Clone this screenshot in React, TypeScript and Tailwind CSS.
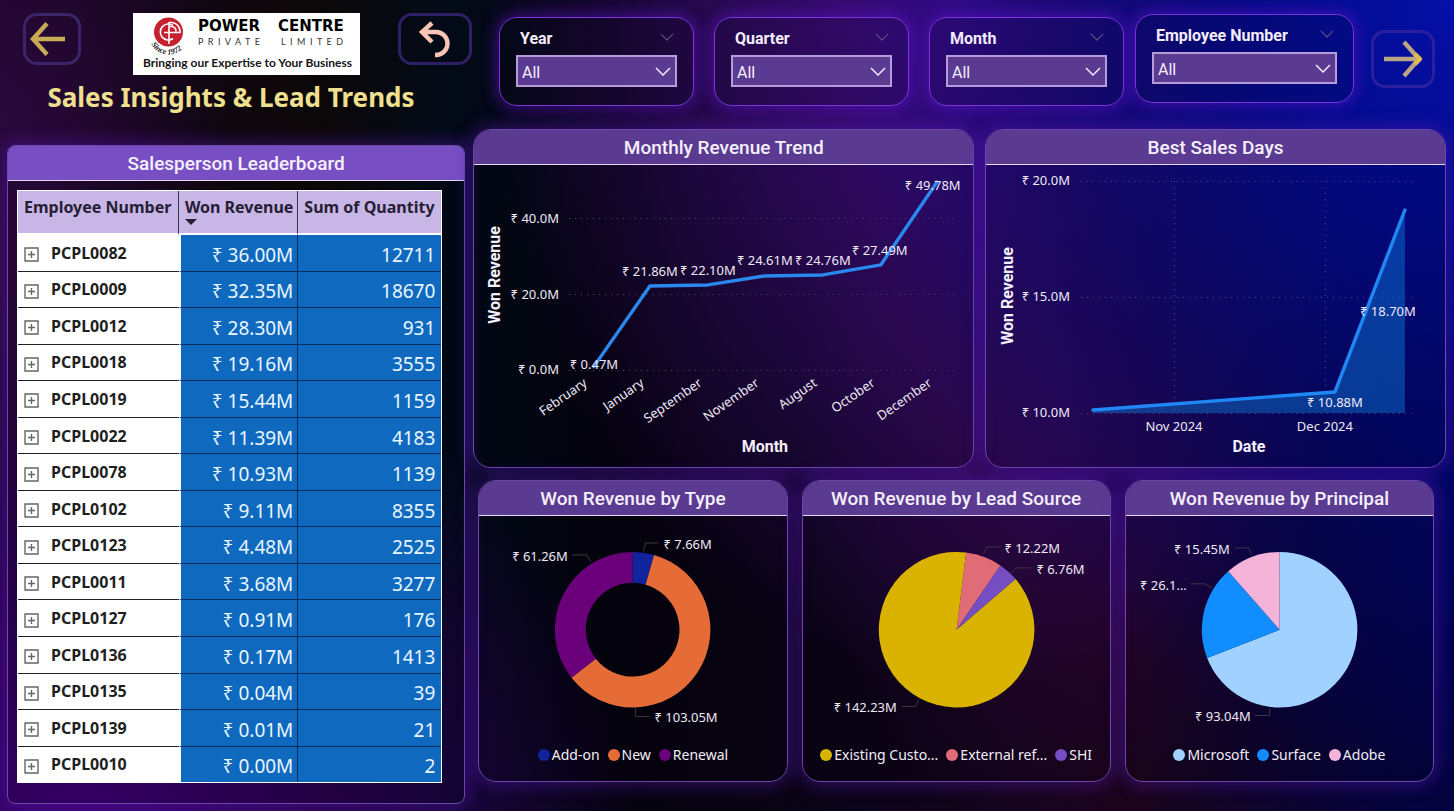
import React from "react";

const DIN = "font-['Roboto',sans-serif]";
const SEGOE = "font-['Noto_Sans',sans-serif]";

function Chevron({ className }: { className: string }) {
  return (
    <svg viewBox="0 0 16 9" aria-hidden="true" className={className} fill="none" stroke="currentColor" strokeWidth="1.5">
      <path d="M1 1l7 7 7-7" />
    </svg>
  );
}

function Slicer({ label }: { label: string }) {
  const id = "slicer-" + label.replace(" ", "-").toLowerCase();
  return (
    <div className="h-[89px] rounded-[18px] border border-[#7a35d8] bg-black/10 px-4 pt-2.5 shadow-[0_0_14px_4px_rgba(100,20,210,0.45)]">
      <div className="flex h-[22px] items-center justify-between pl-1 pr-[3px]">
        <label htmlFor={id} className={DIN + " text-base font-bold text-[#f3ecfb]"}>
          {label}
        </label>
        <Chevron className="mb-1 w-3.5 text-[#5a4a80]" />
      </div>
      <div className="relative mt-[5px]">
        <select
          id={id}
          className={
            DIN +
            " block h-8 w-full appearance-none border-2 border-[#b79cdc] bg-[#5a3b91] pl-1 pr-8 pt-1 text-base leading-6 text-[#f6effc] outline-none"
          }
        >
          <option>All</option>
        </select>
        <Chevron className="pointer-events-none absolute right-1.5 top-3 w-4 text-[#f1e9fa]" />
      </div>
    </div>
  );
}

function Panel({
  title,
  className = "",
  headClass = "bg-[#5a3b91]",
  children,
}: {
  title: string;
  className?: string;
  headClass?: string;
  children: React.ReactNode;
}) {
  return (
    <section
      className={
        "flex min-w-0 flex-col overflow-hidden border border-[#6c46a8] bg-black/10 shadow-[0_0_16px_5px_rgba(84,24,180,0.4)] " +
        className
      }
    >
      <h2
        className={
          DIN +
          " flex h-[35px] shrink-0 items-center justify-center border-b border-[#e6d8f6] pt-0.5 text-[19px] font-medium text-[#f6effc] " +
          headClass
        }
      >
        {title}
      </h2>
      {children}
    </section>
  );
}

const ROWS: [string, string, string][] = [
  ["PCPL0082", "₹ 36.00M", "12711"],
  ["PCPL0009", "₹ 32.35M", "18670"],
  ["PCPL0012", "₹ 28.30M", "931"],
  ["PCPL0018", "₹ 19.16M", "3555"],
  ["PCPL0019", "₹ 15.44M", "1159"],
  ["PCPL0022", "₹ 11.39M", "4183"],
  ["PCPL0078", "₹ 10.93M", "1139"],
  ["PCPL0102", "₹ 9.11M", "8355"],
  ["PCPL0123", "₹ 4.48M", "2525"],
  ["PCPL0011", "₹ 3.68M", "3277"],
  ["PCPL0127", "₹ 0.91M", "176"],
  ["PCPL0136", "₹ 0.17M", "1413"],
  ["PCPL0135", "₹ 0.04M", "39"],
  ["PCPL0139", "₹ 0.01M", "21"],
  ["PCPL0010", "₹ 0.00M", "2"],
];

function Leaderboard() {
  return (
    <table
      className={
        SEGOE +
        " mb-5 ml-[9px] mr-[22px] mt-[9px] h-[593px] border-separate border-spacing-0 whitespace-nowrap border border-white bg-white"
      }
    >
      <thead>
        <tr className="h-11 bg-[#c8b6e6] text-left align-top text-base font-bold leading-5 text-[#252033]">
          <th scope="col" className="w-[38%] border-b-2 border-r border-b-white border-r-[#3b3052] pl-1.5 pt-1.5">
            Employee Number
          </th>
          <th scope="col" className="w-[28%] border-b-2 border-r border-b-white border-r-[#3b3052] pl-1.5 pr-1 pt-1.5">
            Won Revenue
            <svg viewBox="0 0 12 6" aria-hidden="true" className="mt-0.5 block w-3" fill="currentColor">
              <path d="M0 0h12L6 6z" />
            </svg>
          </th>
          <th scope="col" className="border-b-2 border-white pl-1.5 pt-1.5">
            Sum of Quantity
          </th>
        </tr>
      </thead>
      <tbody>
        {ROWS.map(([id, revenue, quantity], i) => {
          const line = i === ROWS.length - 1 ? "" : "border-b ";
          return (
            <tr key={id}>
              <th scope="row" className={line + "border-[#222222] pl-1.5 text-left"}>
                <div className="flex items-center gap-3">
                  <button type="button" aria-label={"Expand " + id} className="mt-1 block text-[#666666]">
                    <svg viewBox="0 0 15 15" className="w-[15px]" fill="none" stroke="currentColor">
                      <path d="M1 1h13v13H1zM7.5 4v7M4 7.5h7" strokeWidth="1.4" />
                    </svg>
                  </button>
                  <span className="text-base font-bold leading-5 text-[#1f1f1f]">{id}</span>
                </div>
              </th>
              <td
                className={
                  line +
                  "border-l-2 border-r border-b-[#082f5c] border-l-white border-r-[#082f5c] bg-[#0f6abf] pr-1 pt-1 text-right text-[19px] leading-6 text-[#eaf6ff]"
                }
              >
                {revenue}
              </td>
              <td className={line + "border-[#082f5c] bg-[#0f6abf] pr-1.5 pt-1 text-right text-[19px] leading-6 text-[#eaf6ff]"}>
                {quantity}
              </td>
            </tr>
          );
        })}
      </tbody>
    </table>
  );
}

const tick = SEGOE + " fill-[#efe9f6] text-[13px]";
const axis = DIN + " fill-[#f6effc] text-base font-bold";

const MONTHS: [string, number, number, string, number, number][] = [
  ["February", 119, 203, "₹ 0.47M", 120, 204],
  ["January", 176, 121, "₹ 21.86M", 176, 111],
  ["September", 234, 120, "₹ 22.10M", 234, 110],
  ["November", 291, 111, "₹ 24.61M", 291, 100],
  ["August", 349, 110, "₹ 24.76M", 349, 100],
  ["October", 407, 100, "₹ 27.49M", 406, 90],
  ["December", 464, 16, "₹ 49.78M", 459, 25],
];

function MonthlyTrend() {
  return (
    <svg viewBox="0 0 499 302" className="block w-full" role="img" aria-label="Monthly Revenue Trend">
      <g stroke="#5b4a70" strokeDasharray="1 5">
        <path d="M95 53.5H484M95 129.5H484M95 205.5H484" />
      </g>
      <g className={tick} textAnchor="end">
        <text x="85" y="58">₹ 40.0M</text>
        <text x="85" y="134">₹ 20.0M</text>
        <text x="85" y="209">₹ 0.0M</text>
      </g>
      <polyline fill="none" stroke="#2a88ee" strokeWidth="3.4" strokeLinejoin="round" points={MONTHS.map((m) => m[1] + "," + m[2]).join(" ")} />
      {MONTHS.map(([name, x, , label, lx, ly]) => (
        <g key={name} className={tick}>
          <text x={lx} y={ly} textAnchor="middle">{label}</text>
          <text textAnchor="end" transform={"translate(" + (x - 5) + " 220) rotate(-35)"}>{name}</text>
        </g>
      ))}
      <text className={axis} textAnchor="middle" transform="translate(26 110) rotate(-90)">Won Revenue</text>
      <text className={axis} textAnchor="middle" x="291" y="287">Month</text>
    </svg>
  );
}

function BestDays() {
  return (
    <svg viewBox="0 0 459 302" className="block w-full" role="img" aria-label="Best Sales Days">
      <g stroke="#4b4a90" strokeDasharray="1 5">
        <path d="M95 16.5H427M95 132.5H427M95 248.5H427M188.5 16V248M339.5 16V248" />
      </g>
      <path d="M107 245L349 227L419 45V248H107z" fill="#1190f0" fillOpacity="0.38" />
      <polyline points="107,245 349,227 419,45" fill="none" stroke="#1f88f6" strokeWidth="3.4" strokeLinecap="round" strokeLinejoin="round" />
      <g className={tick} textAnchor="end">
        <text x="84" y="20">₹ 20.0M</text>
        <text x="84" y="136">₹ 15.0M</text>
        <text x="84" y="252">₹ 10.0M</text>
      </g>
      <g className={tick} textAnchor="middle">
        <text x="188" y="266">Nov 2024</text>
        <text x="339" y="266">Dec 2024</text>
        <text x="402" y="151">₹ 18.70M</text>
        <text x="349" y="242">₹ 10.88M</text>
      </g>
      <text className={axis} textAnchor="middle" transform="translate(27 131) rotate(-90)">Won Revenue</text>
      <text className={axis} textAnchor="middle" x="263" y="287">Date</text>
    </svg>
  );
}

type Slice = { name: string; value: number; color: string; label: string; x: number; y: number; end?: boolean; leader: string };

function PieChart({ title, slices, start = 0, hole = 0 }: { title: string; slices: Slice[]; start?: number; hole?: number }) {
  const total = slices.reduce((sum, s) => sum + s.value, 0);
  const cx = 154;
  const cy = 114;
  const r = 78;
  const at = (deg: number, rad: number) => {
    const a = (deg * Math.PI) / 180;
    return (cx + rad * Math.sin(a)).toFixed(2) + " " + (cy - rad * Math.cos(a)).toFixed(2);
  };
  let angle = start;
  return (
    <svg viewBox="0 0 308 220" className="block w-full" role="img" aria-label={title}>
      {slices.map((s) => {
        const from = angle;
        const to = (angle += (s.value / total) * 360);
        const large = to - from > 180 ? 1 : 0;
        const inner = hole ? "L" + at(to, hole) + "A" + hole + " " + hole + " 0 " + large + " 0 " + at(from, hole) : "L" + cx + " " + cy;
        return (
          <g key={s.name}>
            <path fill={s.color} d={"M" + at(from, r) + "A" + r + " " + r + " 0 " + large + " 1 " + at(to, r) + inner + "z"} />
            <polyline points={s.leader} fill="none" stroke="#3c3644" />
            <text className={tick} x={s.x} y={s.y} textAnchor={s.end ? "end" : "start"}>{s.label}</text>
          </g>
        );
      })}
    </svg>
  );
}

function Legend({ items }: { items: [string, string][] }) {
  return (
    <ul className={SEGOE + " mb-1.5 flex h-10 items-center justify-center gap-2 whitespace-nowrap text-sm text-[#f2eef8]"}>
      {items.map(([name, dot]) => (
        <li key={name} className="flex items-center gap-0.5">
          <span className={"size-3 rounded-full " + dot} />
          {name}
        </li>
      ))}
    </ul>
  );
}

const TYPE: Slice[] = [
  { name: "Add-on", value: 7.66, color: "#12239e", label: "₹ 7.66M", x: 185, y: 33, leader: "165,35 167,27 180,27" },
  { name: "New", value: 103.05, color: "#e66c37", label: "₹ 103.05M", x: 176, y: 207, leader: "157,192 157,201 171,201" },
  { name: "Renewal", value: 61.26, color: "#6b007b", label: "₹ 61.26M", x: 89, y: 45, end: true, leader: "93,39 108,39 112,46" },
];

const SOURCE: Slice[] = [
  { name: "External", value: 12.22, color: "#e06c78", label: "₹ 12.22M", x: 202, y: 37, leader: "181,38 184,31 198,31" },
  { name: "SHI", value: 6.76, color: "#744ec2", label: "₹ 6.76M", x: 234, y: 58, leader: "209,57 214,52 229,52" },
  { name: "Existing", value: 142.23, color: "#d9b300", label: "₹ 142.23M", x: 94, y: 197, end: true, leader: "99,191 113,191 116,184" },
];

const PRINCIPAL: Slice[] = [
  { name: "Microsoft", value: 93.04, color: "#a0d1ff", label: "₹ 93.04M", x: 125, y: 206, end: true, leader: "129,200 144,200 144,193" },
  { name: "Surface", value: 26.17, color: "#118dff", label: "₹ 26.1...", x: 61, y: 74, end: true, leader: "65,68 79,68 86,72" },
  { name: "Adobe", value: 15.45, color: "#f4b4da", label: "₹ 15.45M", x: 104, y: 38, end: true, leader: "109,32 123,32 126,39" },
];

function Logo() {
  const gap = "\u00a0\u00a0";
  return (
    <svg viewBox="0 0 227 62" className="block w-[227px] shrink-0" role="img" aria-label="Power Centre Private Limited">
      <rect width="227" height="62" fill="#ffffff" />
      <circle cx="35.5" cy="19" r="14.5" fill="#c5202e" />
      <g fill="none" stroke="#ffffff" strokeWidth="1.6">
        <path d="M40 12.5A8 8 0 1 0 40 25.5" />
        <path d="M36 9v22M36 9.5h3a9 9 0 0 1 8 8.5v1.500h-16M36 13.5h3a5 5 0 0 1 4 5" />
      </g>
      <path id="since-arc" d="M18 30A19 19 0 0 0 53 30" fill="none" />
      <text className="fill-[#222222] font-['Liberation_Serif',serif] text-[8px] font-bold italic">
        <textPath href="#since-arc" startOffset="1">Since 1972</textPath>
      </text>
      <g className="fill-black font-['DejaVu_Sans',sans-serif] text-[15px] font-bold">
        <text x="65" y="18">POWER</text>
        <text x="145" y="18">CENTRE</text>
      </g>
      <g className="fill-[#333333] font-['Lato',sans-serif] text-[9px]">
        <text x="65" y="32">{"PRIVATE".split("").join(gap)}</text>
        <text x="148" y="32">{"LIMITED".split("").join(gap)}</text>
      </g>
      <text x="10" y="54" className="fill-[#161616] font-['Lato',sans-serif] text-[12px] font-bold">
        Bringing our Expertise to Your Business
      </text>
    </svg>
  );
}

const iconButton = "flex shrink-0 items-center justify-center rounded-[14px] border-[3px]";

export default function App() {
  return (
    <div className="min-h-screen w-full bg-[radial-gradient(ellipse_42%_95%_at_100%_0%,#0410a8_0%,rgba(2,10,138,0.9)_35%,rgba(2,6,110,0.5)_70%,transparent_100%),radial-gradient(ellipse_34%_85%_at_67%_0%,rgba(70,14,150,0.95)_0%,rgba(54,12,110,0.7)_50%,transparent_100%),radial-gradient(ellipse_18%_55%_at_73%_50%,rgba(72,8,96,0.6)_0%,transparent_100%),radial-gradient(ellipse_38%_65%_at_6%_104%,rgba(64,0,124,0.9)_0%,rgba(42,0,88,0.65)_60%,transparent_100%),radial-gradient(ellipse_16%_80%_at_0%_30%,rgba(52,10,76,0.8)_0%,transparent_100%),radial-gradient(ellipse_24%_60%_at_100%_70%,rgba(0,0,100,0.6)_0%,transparent_100%),linear-gradient(90deg,#14041c_0%,#0c0808_22%,#020a18_31%,#05030f_42%,#0c0418_60%,#180418_78%,#04042e_100%)] pb-[7px]">
      <header className="flex h-[129px] items-start">
        <div className="w-[472px] shrink-0 pl-[23px] pt-[13px]">
          <div className="flex items-start">
            <button type="button" aria-label="Back" className={iconButton + " mr-[52px] h-[52px] w-[58px] border-[#3b2468] pr-2"}>
              <svg viewBox="0 0 36 36" className="w-9" fill="none" stroke="#c9aa55" strokeWidth="4.4">
                <path d="M35 18H4M17 2.5L3 18l14 15.5" />
              </svg>
            </button>
            <Logo />
            <button type="button" aria-label="Undo" className={iconButton + " ml-[38px] h-[52px] w-[74px] border-[#2f1f66] pt-0.5"}>
              <svg viewBox="0 0 36 38" className="w-9" fill="none" stroke="#f8c4b4" strokeWidth="4.4">
                <path d="M15 2L5 11l10 10M5 11h14a11.5 11.5 0 0 1 0 23h-1" />
              </svg>
            </button>
          </div>
          <h1 className={SEGOE + " mt-[5px] w-[416px] text-center text-[26px] font-bold leading-[34px] text-[#efe08f]"}>
            Sales Insights &amp; Lead Trends
          </h1>
        </div>
        <div className="flex min-w-0 flex-1 items-start pl-[27px] pr-[19px] pt-3.5">
          <div className="mt-[3px] flex min-w-0 flex-[625] gap-5">
            {["Year", "Quarter", "Month"].map((label) => (
              <div key={label} className="min-w-0 flex-1">
                <Slicer label={label} />
              </div>
            ))}
          </div>
          <div className="ml-[11px] min-w-0 flex-[219]">
            <Slicer label="Employee Number" />
          </div>
          <button type="button" aria-label="Next" className={iconButton + " ml-[17px] mt-4 h-[58px] w-16 border-[#2b1f9e]"}>
            <svg viewBox="0 0 38 38" className="w-[38px] shrink-0" fill="none" stroke="#b9a584" strokeWidth="4.4">
              <path d="M0 19h35M20 2l15 17-15 17" />
              <path d="M31 14l5 5-5 5" stroke="#e0bb50" />
            </svg>
          </button>
        </div>
      </header>
      <main className="flex items-start gap-2 pl-[7px] pr-2">
        <Panel title="Salesperson Leaderboard" headClass="bg-[#774fc2]" className="mt-4 flex-[457] rounded-lg">
          <Leaderboard />
        </Panel>
        <div className="min-w-0 flex-[974]">
          <div className="flex gap-[11px]">
            <Panel title="Monthly Revenue Trend" className="flex-[501] rounded-[18px]">
              <MonthlyTrend />
            </Panel>
            <Panel title="Best Sales Days" className="flex-[461] rounded-[18px]">
              <BestDays />
            </Panel>
          </div>
          <div className="mt-3 grid grid-cols-3 gap-3.5 pl-[5px] pr-3">
            <Panel title="Won Revenue by Type" className="rounded-[18px]">
              <PieChart title="Won Revenue by Type" slices={TYPE} hole={47} />
              <Legend items={[["Add-on", "bg-[#12239e]"], ["New", "bg-[#e66c37]"], ["Renewal", "bg-[#6b007b]"]]} />
            </Panel>
            <Panel title="Won Revenue by Lead Source" className="rounded-[18px]">
              <PieChart title="Won Revenue by Lead Source" slices={SOURCE} start={7} />
              <Legend items={[["Existing Custo...", "bg-[#d9b300]"], ["External ref...", "bg-[#e06c78]"], ["SHI", "bg-[#744ec2]"]]} />
            </Panel>
            <Panel title="Won Revenue by Principal" className="rounded-[18px]">
              <PieChart title="Won Revenue by Principal" slices={PRINCIPAL} />
              <Legend items={[["Microsoft", "bg-[#a0d1ff]"], ["Surface", "bg-[#118dff]"], ["Adobe", "bg-[#f4b4da]"]]} />
            </Panel>
          </div>
        </div>
      </main>
    </div>
  );
}
